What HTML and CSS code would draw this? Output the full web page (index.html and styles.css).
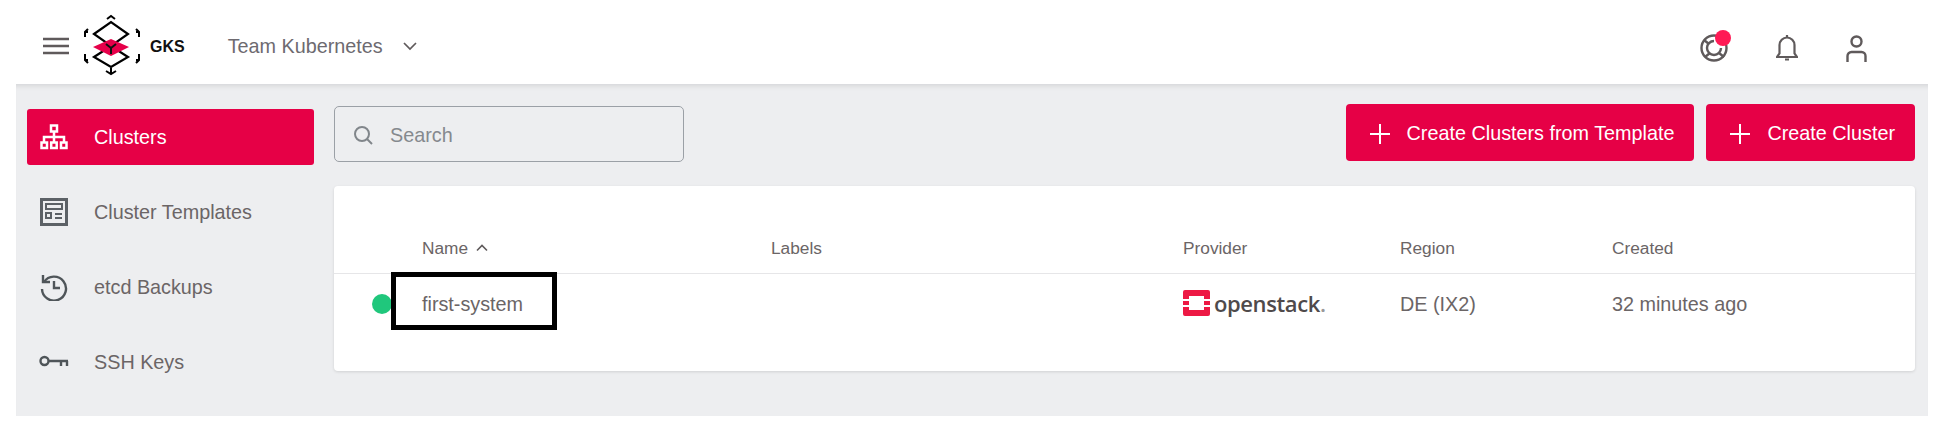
FILE: index.html
```html
<!DOCTYPE html>
<html>
  <head>
    <title>Clusters</title>
    <link rel="stylesheet" href="styles.css">
  </head>
  <body>
    <header class="topbar">
      <svg class="menu-icon" width="26" height="18" viewBox="0 0 26 18">
        <path d="M0 2h26M0 9h26M0 16h26" stroke="#5f5a5b" stroke-width="2.4" fill="none" />
      </svg>
      <svg class="logo" width="58" height="64" viewBox="0 0 58 64">
        <path d="M11 21L28 9 45 21 28 33z" fill="#fff" stroke="#000" stroke-width="2.2" />
        <path d="M11 44L28 33 45 44 28 54z" fill="#fff" stroke="#000" stroke-width="2.2" />
        <path d="M10 34L28 26 46 34 28 43z" fill="#e6004a" />
        <path d="M23 31l5 4 5-4M28 35v6" fill="none" stroke="#111" stroke-width="2" />
        <path d="M24 6l4-3 4 3M28 55v6M23 58l5 3 5-3" fill="none" stroke="#000" stroke-width="2" />
        <path d="M5 16l-3 3v5M2 19h3M53 16l3 3v5M56 19h-3M2 41v6l3 3M2 47h3M56 41v6l-3 3M56 47h-3" fill="none" stroke="#000" stroke-width="2" />
      </svg>
      <span class="brand">GKS</span>
      <span class="team">Team Kubernetes</span>
      <svg class="chevron" width="14" height="9" viewBox="0 0 14 9">
        <path d="M1 1l6 6 6-6" fill="none" stroke="#5f5a5b" stroke-width="1.7" />
      </svg>
      <div class="top-actions">
        <div class="top-icon">
          <svg width="28" height="28" viewBox="0 0 28 28" fill="none" stroke="#5f5a5b" stroke-width="2.400">
            <circle cx="14" cy="14" r="12.500" />
            <path d="M14 7a7 7 0 1 0 7 7" />
            <path d="M4 6l5 4M24 23l-5-4M5 23l5-4" />
          </svg>
          <span class="notify-dot"></span>
        </div>
        <div class="top-icon">
          <svg width="22" height="26" viewBox="0 0 22 26" fill="none" stroke="#5f5a5b" stroke-width="2.200">
            <path d="M1 22h20l-2.500-3.500V10a7.500 7.500 0 0 0-15 0v8.500z" />
            <path d="M11 0v2.500M9 24.500h4" />
          </svg>
        </div>
        <div class="top-icon">
          <svg width="21" height="27" viewBox="0 0 21 27" fill="none" stroke="#5f5a5b" stroke-width="2.400">
            <circle cx="10.500" cy="6.500" r="5" />
            <path d="M1.500 27v-6a4 4 0 0 1 4-4h10a4 4 0 0 1 4 4v6" />
          </svg>
        </div>
      </div>
    </header>

    <div class="workspace">
      <nav class="sidebar">
        <a class="nav-item active">
          <span class="nav-icon">
            <svg width="28" height="26" viewBox="0 0 28 26" fill="none" stroke="#fff" stroke-width="2.500">
              <rect x="11" y="1.500" width="6" height="6" />
              <path d="M14 7v6M4 18v-5h20v5M14 13v5" />
              <rect x="1.500" y="18.500" width="5.500" height="5.500" />
              <rect x="11.200" y="18.500" width="5.500" height="5.500" />
              <rect x="21" y="18.500" width="5.500" height="5.500" />
            </svg>
          </span>
          Clusters
        </a>
        <a class="nav-item">
          <span class="nav-icon">
            <svg width="28" height="28" viewBox="0 0 28 28" fill="none" stroke="#5c6166" stroke-width="2">
              <rect x="1.500" y="1.500" width="25" height="25" stroke-width="3" />
              <rect x="6" y="6" width="16" height="5" />
              <rect x="6" y="15" width="5" height="5" />
              <path d="M15 16h7M15 20h7" />
            </svg>
          </span>
          Cluster Templates
        </a>
        <a class="nav-item">
          <span class="nav-icon">
            <svg width="28" height="28" viewBox="0 0 28 28" fill="none" stroke="#4f5559" stroke-width="2.400">
              <path d="M4 9a12 12 0 1 1-2 7" />
              <path d="M3 2v7h7" />
              <path d="M14 8v7h6" />
            </svg>
          </span>
          etcd Backups
        </a>
        <a class="nav-item">
          <span class="nav-icon">
            <svg width="30" height="14" viewBox="0 0 30 14" fill="none" stroke="#4f5559" stroke-width="2.400">
              <circle cx="5.500" cy="6" r="4" />
              <path d="M10 6h19M22 6v5M28 6v5" />
            </svg>
          </span>
          SSH Keys
        </a>
      </nav>

      <main class="content">
        <div class="toolbar">
          <div class="search">
            <svg width="20" height="20" viewBox="0 0 20 20" fill="none" stroke="#81868b" stroke-width="2">
              <circle cx="9" cy="9" r="7" />
              <path d="M14 14l5 5" />
            </svg>
            <span>Search</span>
          </div>
          <div class="actions">
            <button class="btn">
              <svg width="20" height="20" viewBox="0 0 20 20"><path d="M10 0v20M0 10h20" stroke="#fff" stroke-width="2" /></svg>
              Create Clusters from Template
            </button>
            <button class="btn">
              <svg width="20" height="20" viewBox="0 0 20 20"><path d="M10 0v20M0 10h20" stroke="#fff" stroke-width="2" /></svg>
              Create Cluster
            </button>
          </div>
        </div>

        <section class="card">
          <div class="row head">
            <span></span>
            <span class="sort">
              Name
              <svg width="12" height="8" viewBox="0 0 12 8"><path d="M1 6.500l5-5 5 5" fill="none" stroke="#5f5a5b" stroke-width="1.600" /></svg>
            </span>
            <span>Labels</span>
            <span>Provider</span>
            <span>Region</span>
            <span>Created</span>
          </div>
          <div class="row body">
            <span class="dot-cell"><span class="status-dot"></span></span>
            <span class="name-cell">first-system<span class="callout"></span></span>
            <span></span>
            <span class="provider">
              <svg width="27" height="26" viewBox="0 0 27 26">
                <path fill-rule="evenodd" fill="#ed1944" d="M2 0h23a2 2 0 0 1 2 2v7h-6V6H6v3H0V2a2 2 0 0 1 2-2zM0 11h6v4H0zM21 11h6v4h-6zM0 17h6v3h15v-3h6v7a2 2 0 0 1-2 2H2a2 2 0 0 1-2-2z" />
              </svg>
              <span class="provider-name">openstack<span class="provider-stop">.</span></span>
            </span>
            <span>DE (IX2)</span>
            <span>32 minutes ago</span>
          </div>
        </section>
      </main>
    </div>
  </body>
</html>
```

FILE: styles.css
```css
html,
body {
  margin: 0;
  height: 430px;
  overflow: hidden;
  background: #fff;
  font-family: "Liberation Sans", Roboto, sans-serif;
  color: #6b6566;
}

.topbar {
  display: flex;
  align-items: center;
  height: 84px;
  padding: 8px 74px 0 43px;
  box-sizing: border-box;
}
.menu-icon {
  margin-right: 14px;
}
.logo {
  margin-top: -3px;
}
.brand {
  margin-left: 9px;
  margin-top: 2px;
  font-size: 16px;
  font-weight: 700;
  color: #111;
}
.team {
  margin-left: 43px;
  font-size: 19.8px;
  color: #6d6a70;
}
.chevron {
  margin-left: 20px;
}
.top-actions {
  display: flex;
  align-items: center;
  gap: 48px;
  margin-left: auto;
  margin-top: 4px;
}
.top-icon {
  position: relative;
  display: flex;
}
.notify-dot {
  position: absolute;
  top: -4px;
  left: 15px;
  width: 16px;
  height: 16px;
  border-radius: 50%;
  background: #ff1a55;
}

.workspace {
  display: flex;
  height: 332px;
  margin: 0 13px 0 16px;
  background: #edeef0;
  box-shadow: inset 0 6px 5px -4px #d5d6d8;
}

.sidebar {
  width: 287px;
  flex-shrink: 0;
  margin-left: 11px;
  padding-top: 25px;
}
.nav-item {
  display: flex;
  align-items: center;
  height: 56px;
  margin-bottom: 19px;
  border-radius: 3px;
  font-size: 19.8px;
  color: #6b6566;
}
.nav-item.active {
  background: #e60046;
  color: #fff;
}
.nav-icon {
  display: flex;
  justify-content: center;
  width: 54px;
  margin-right: 13px;
}

.content {
  flex: 1;
  margin: 0 13px 0 20px;
}
.toolbar {
  display: flex;
  justify-content: space-between;
  height: 102px;
  padding-top: 20px;
  box-sizing: border-box;
}
.search {
  display: flex;
  align-items: center;
  gap: 17px;
  width: 350px;
  height: 56px;
  margin-top: 2px;
  padding: 2px 0 0 18px;
  box-sizing: border-box;
  border: 1px solid #9ba0a6;
  border-radius: 5px;
  font-size: 19.8px;
  color: #85898e;
}
.actions {
  display: flex;
  gap: 12px;
}
.btn {
  display: flex;
  align-items: center;
  gap: 17px;
  height: 57px;
  padding: 2px 20px 0 24px;
  border: none;
  border-radius: 4px;
  background: #e60046;
  color: #fff;
  font-family: inherit;
  font-size: 19.8px;
}

.card {
  height: 185px;
  background: #fff;
  border-radius: 4px;
  box-shadow: 0 1px 3px rgba(0, 0, 0, 0.12);
}
.row {
  display: grid;
  grid-template-columns: 88px 349px 412px 217px 212px 1fr;
  align-items: center;
}
.row.head {
  height: 88px;
  padding-top: 38px;
  box-sizing: border-box;
  border-bottom: 1px solid #e6e6e8;
  font-size: 17.3px;
}
.row.body {
  height: 60px;
  font-size: 19.8px;
}
.sort svg {
  margin-left: 3px;
  vertical-align: 2px;
}
.dot-cell {
  display: flex;
  justify-content: flex-end;
  padding-right: 30px;
}
.status-dot {
  width: 20px;
  height: 20px;
  border-radius: 50%;
  background: #20c77c;
}
.name-cell {
  position: relative;
}
.callout {
  position: absolute;
  left: -31px;
  top: -21px;
  width: 166px;
  height: 58px;
  box-sizing: border-box;
  border: 5px solid #000;
}
.provider {
  display: flex;
  align-items: center;
  gap: 4px;
  margin-top: -2px;
}
.provider-name {
  font-family: "Open Sans", sans-serif;
  font-size: 22px;
  font-weight: 600;
  letter-spacing: -0.4px;
  color: #4f4a4b;
}
.provider-stop {
  color: #999;
}
```
